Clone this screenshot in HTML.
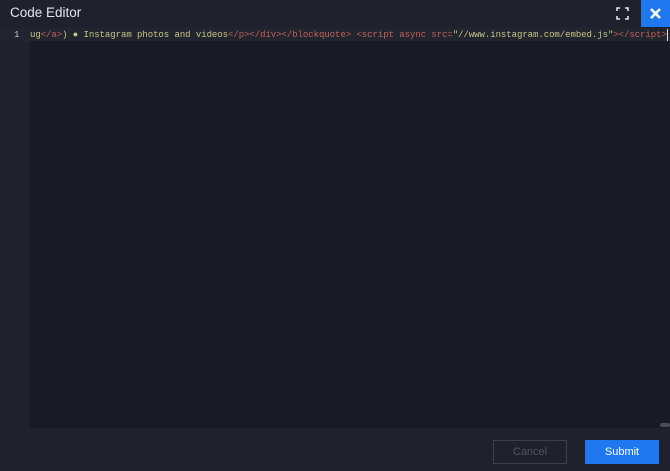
<!DOCTYPE html>
<html><head><meta charset="utf-8"><style>
*{margin:0;padding:0;box-sizing:border-box}
body{width:670px;height:471px;background:#1f212c;position:relative;overflow:hidden;font-family:"Liberation Sans",sans-serif}
.title{position:absolute;left:10px;top:5px;color:#e4e5ea;font-size:13.5px}
.close{position:absolute;right:0;top:0;width:29px;height:27px;background:#1f78f0;display:flex;align-items:center;justify-content:center}
.fs{position:absolute;left:616px;top:7px}
.gutter{position:absolute;left:0;top:28px;width:30px;height:400px;background:#1f212c}
.ln{position:absolute;left:0;top:28px;width:670px;height:13px;background:#22242e}
.editor{position:absolute;left:30px;top:41px;width:640px;height:387px;background:#191b24}
.num{position:absolute;left:14px;top:30px;color:#c8c9cf;font:9px "Liberation Mono",monospace}
.code{position:absolute;left:30px;top:30px;font:9px "Liberation Mono",monospace;white-space:pre;color:#c5c68a;letter-spacing:-0.05px}
.t{color:#c4605c}
.cur{position:absolute;left:667px;top:29px;width:1px;height:12px;background:#ddd}
.scroll{position:absolute;left:660px;top:423px;width:10px;height:4px;border-radius:2px;background:#4a4d58}
.btn{position:absolute;top:440px;height:24px;font-size:11px;display:flex;align-items:center;justify-content:center}
.cancel{left:493px;width:74px;border:1px solid #3e414c;color:#50535e}
.submit{left:585px;width:74px;background:#1f78f0;color:#fff}
</style></head><body>
<div class="title">Code Editor</div>
<svg class="fs" width="13" height="13" viewBox="0 0 13 13" fill="none" stroke="#e4e5ea" stroke-width="1.6"><path d="M1 4V1h3M9 1h3v3M12 9v3H9M4 12H1V9"/></svg>
<div class="close"><svg width="11" height="11" viewBox="0 0 11 11" stroke="#fff" stroke-width="2.4"><path d="M1 1l9 9M10 1l-9 9"/></svg></div>
<div class="gutter"></div>
<div class="ln"></div>
<div class="editor"></div>
<div class="num">1</div>
<div class="code">ug<span class="t">&lt;/a&gt;</span>) ● Instagram photos and videos<span class="t">&lt;/p&gt;&lt;/div&gt;&lt;/blockquote&gt;</span> <span class="t">&lt;script async src=</span>"//www.instagram.com/embed.js"<span class="t">&gt;&lt;/script&gt;</span></div>
<div class="cur"></div>
<div class="scroll"></div>
<div class="btn cancel">Cancel</div>
<div class="btn submit">Submit</div>
</body></html>
